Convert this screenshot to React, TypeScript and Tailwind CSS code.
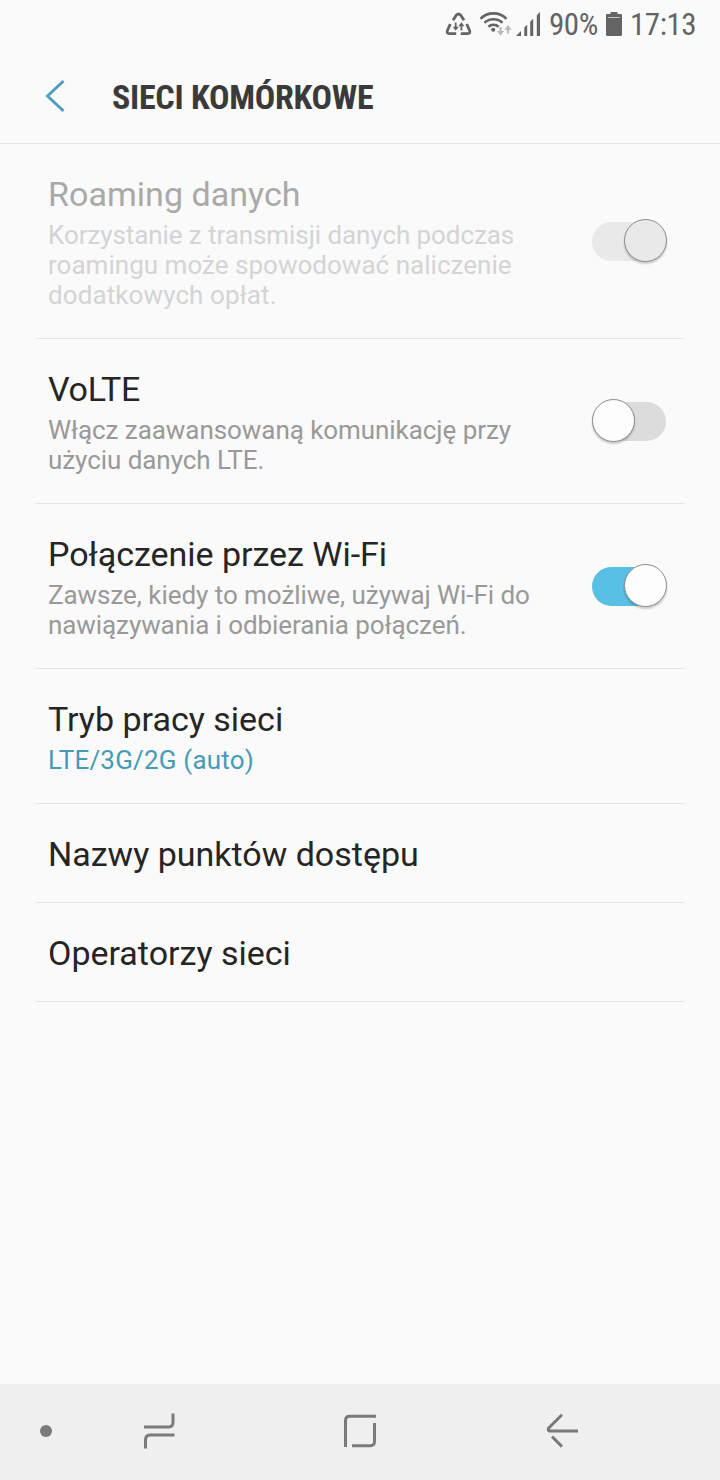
import React from 'react';

type ToggleState = 'on' | 'off' | 'disabled';

interface Line {
  text: string;
  tracking?: string;
}

function Toggle({ state }: { state: ToggleState }) {
  const track = state === 'on' ? 'bg-[#57c0e4]' : state === 'off' ? 'bg-[#dcdcdc]' : 'bg-[#e9e9e9]';
  const knob = state === 'disabled' ? 'bg-[#e9e9e9]' : 'bg-[#fdfdfd]';
  return (
    <span className={`flex h-[39px] w-[74px] shrink-0 items-center rounded-full ${track} ${state === 'off' ? 'justify-start' : 'justify-end'}`}>
      <span className={`-mr-px mb-0.5 h-[43px] w-[43px] shrink-0 rounded-full border border-[#8c8c8c] shadow-[0_2px_2px_rgba(0,0,0,0.2)] ${knob}`} />
    </span>
  );
}

function Row({ title, titleTracking = '', lines = [], state, height, accent }: {
  title: string;
  titleTracking?: string;
  lines?: Line[];
  state?: ToggleState;
  height: string;
  accent?: boolean;
}) {
  const disabled = state === 'disabled';
  const lineColor = accent ? 'text-[#459ab8]' : disabled ? 'text-[#d4d4d4]' : 'text-[#999]';
  return (
    <section className={`mx-9 flex justify-between border-b border-[#e5e5e5] pr-[18px] pl-3 ${height}`}>
      <div className="pt-[30px]">
        <h2 className={`mb-1.5 text-[34px] leading-10 whitespace-nowrap ${titleTracking} ${disabled ? 'text-[#a9a9a9]' : 'text-[#252525]'}`}>{title}</h2>
        {lines.map((l) => (
          <p key={l.text} className={`text-[26px] leading-[30px] whitespace-nowrap ${lineColor} ${l.tracking ?? ''}`}>{l.text}</p>
        ))}
      </div>
      {state && <div className="flex items-center"><Toggle state={state} /></div>}
    </section>
  );
}

function StatusBar() {
  return (
    <div className="flex h-[50px] shrink-0 items-center pl-[445px] text-[31px] leading-[50px] tracking-[-0.45px] text-[#646464] [font-family:'Roboto_Condensed',Roboto,sans-serif]">
      <svg className="shrink-0" width="27" height="50" viewBox="445 0 27 50" fill="none" stroke="#646464">
        <g strokeWidth="2.8" strokeLinejoin="round">
          <path d="M453 20.3 L456.4 15 Q458.5 12.9 460.6 15 L464 20.3" />
          <path d="M450.3 24 L447.4 30.5 Q446.4 33.6 449.3 33.7 H456.2" />
          <path d="M466.7 24 L469.6 30.5 Q470.6 33.6 467.7 33.7 H460.8" />
        </g>
        <path strokeWidth="1.8" d="M455.7 22.5V28M461.4 24.5V30.5" />
        <path fill="#646464" stroke="none" d="M452.6 26.7h6.2l-3.1 4zM458.3 26.3h6.2l-3.1-4z" />
      </svg>
      <svg className="ml-2 shrink-0" width="32" height="50" viewBox="480 0 32 50" fill="none">
        <g stroke="#646464" strokeWidth="2.6">
          <path d="M480.6 18.8 C487.5 11.6 499.5 11.6 506.4 18.8" />
          <path d="M484.5 22.8 C489.4 18 497.6 18 502.5 22.8" />
          <path d="M488.4 26.7 C491.2 24 495.8 24 498.6 26.7" />
        </g>
        <circle cx="493.2" cy="29.7" r="2" fill="#646464" />
        <path stroke="#bbb" strokeWidth="2.2" d="M500.5 27V33M508 28V33.5" />
        <path fill="#bbb" d="M496.8 31h7.4l-3.7 4.7zM504.3 29.8h7.4l-3.7-4.7z" />
      </svg>
      <svg className="ml-1 shrink-0" width="26" height="50" viewBox="516 0 26 50" fill="#646464">
        <path d="M516 36 L521 31V36zM524.3 27.6 L527.2 24.8V36H524.3zM530.2 21.7 L533.2 18.7V36H530.2zM536.8 15.3 L540 12V36H536.8z" />
      </svg>
      <span className="ml-[7px] w-[47px] shrink-0 whitespace-nowrap">90%</span>
      <svg className="ml-[9px] shrink-0" width="18" height="50" viewBox="605 0 18 50">
        <path fill="#646464" d="M610.5 14V12h7v2H621q1 0 1 1V34.5q0 1.5-1.5 1.5h-13q-1.5 0-1.5-1.5V15q0-1 1-1z" />
        <path d="M608.3 17.5H619.7" stroke="#c8c8c8" strokeWidth="1" />
      </svg>
      <span className="ml-[7px] w-[66px] shrink-0 whitespace-nowrap">17:13</span>
    </div>
  );
}

function NavigationBar() {
  return (
    <nav className="mt-auto flex h-24 shrink-0 items-center bg-[#efefef] pl-10">
      <span className="mb-0.5 h-3 w-3 rounded-full bg-[#7a7a7a]" />
      <svg className="ml-[90px]" width="36" height="40" viewBox="142 1412 36 40" fill="none" stroke="#7a7a7a" strokeWidth="3">
        <path d="M144 1427H168.5Q173 1427 173 1422V1413.5M174.5 1435H150Q145.5 1435 145.5 1440V1448.5" />
      </svg>
      <svg className="ml-[164px]" width="36" height="40" viewBox="342 1412 36 40" fill="none" stroke="#7a7a7a" strokeWidth="3">
        <path d="M345.5 1447V1420.5Q345.5 1416.3 349.7 1416.3H376M352 1445.7H370.3Q374.5 1445.7 374.5 1441.5V1423" />
      </svg>
      <svg className="ml-[166px]" width="36" height="40" viewBox="544 1412 36 40" fill="none" stroke="#7a7a7a" strokeWidth="3" strokeLinejoin="round">
        <path d="M562 1414.8L548.5 1428.2Q547.6 1431 550 1431.1H578M552 1436.5L562 1446.6" />
      </svg>
    </nav>
  );
}

export default function App() {
  return (
    <main className="flex h-[1480px] w-[720px] flex-col overflow-hidden bg-[#fafafa] [font-family:Roboto,sans-serif]">
      <StatusBar />
      <header className="flex h-[94px] shrink-0 items-center border-b border-[#e5e5e5] pl-11">
        <svg className="mb-px shrink-0" width="22" height="36" viewBox="44 78 22 36" fill="none" stroke="#4a9dbd" strokeWidth="2.8">
          <path d="M63.5 81L47.5 96L63.5 111" />
        </svg>
        <h1 className="mt-px ml-[46px] text-[34px] font-bold tracking-[-0.28px] whitespace-nowrap text-[#3a3a3a] [font-family:'Roboto_Condensed',Roboto,sans-serif]">SIECI KOMÓRKOWE</h1>
      </header>
      <Row
        title="Roaming danych"
        titleTracking="tracking-[0.04px]"
        state="disabled"
        height="h-[195px]"
        lines={[
          { text: 'Korzystanie z transmisji danych podczas', tracking: 'tracking-[-0.08px]' },
          { text: 'roamingu może spowodować naliczenie', tracking: 'tracking-[0.02px]' },
          { text: 'dodatkowych opłat.', tracking: 'tracking-[0.1px]' },
        ]}
      />
      <Row
        title="VoLTE"
        titleTracking="tracking-[-0.3px]"
        state="off"
        height="h-[165px]"
        lines={[
          { text: 'Włącz zaawansowaną komunikację przy', tracking: 'tracking-[-0.06px]' },
          { text: 'użyciu danych LTE.', tracking: 'tracking-[-0.06px]' },
        ]}
      />
      <Row
        title="Połączenie przez Wi-Fi"
        titleTracking="tracking-[-0.03px]"
        state="on"
        height="h-[165px]"
        lines={[
          { text: 'Zawsze, kiedy to możliwe, używaj Wi-Fi do', tracking: 'tracking-[-0.05px]' },
          { text: 'nawiązywania i odbierania połączeń.', tracking: 'tracking-[-0.08px]' },
        ]}
      />
      <Row title="Tryb pracy sieci" height="h-[135px]" accent lines={[{ text: 'LTE/3G/2G (auto)', tracking: 'tracking-[0.2px]' }]} />
      <Row title="Nazwy punktów dostępu" height="h-[99px]" />
      <Row title="Operatorzy sieci" height="h-[99px]" />
      <NavigationBar />
    </main>
  );
}
